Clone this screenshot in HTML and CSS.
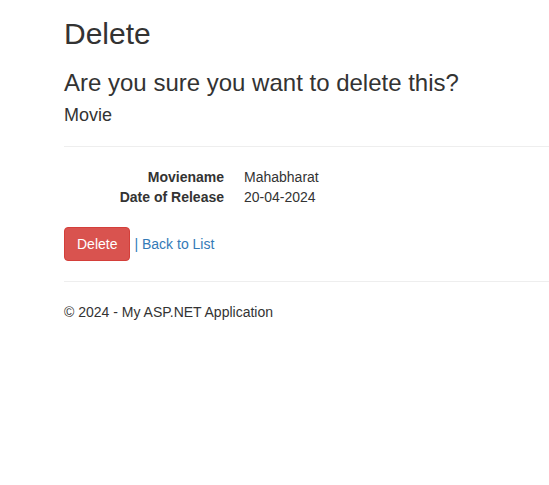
FILE: index.html
```html
<!DOCTYPE html>
<html>
<head>
<meta charset="utf-8">
<title>Delete</title>
<link rel="stylesheet" href="styles.css">
</head>
<body>
<div class="container body-content">
  <h2 class="page-title">Delete</h2>
  <h3 class="confirm">Are you sure you want to delete this?</h3>
  <div>
    <h4 class="entity">Movie</h4>
    <hr class="rule">
    <dl class="dl-horizontal">
      <dt>Moviename</dt>
      <dd>Mahabharat</dd>
      <dt>Date of Release</dt>
      <dd>20-04-2024</dd>
    </dl>
    <form class="actions">
      <button type="button" class="btn btn-danger">Delete</button>
      <a class="back-link" href="#">| Back to List</a>
    </form>
  </div>
  <hr class="rule">
  <footer class="footer">
    <p>&copy; 2024 - My ASP.NET Application</p>
  </footer>
</div>
</body>
</html>
```

FILE: styles.css
```css
html, body {
  margin: 0;
  padding: 0;
  background: #fff;
}
body {
  font-family: "Liberation Sans", Arial, Helvetica, sans-serif;
  font-size: 14px;
  line-height: 1.42857143;
  color: #333;
}
.container {
  padding-left: 64px;
  padding-top: 17px;
}
h2, h3, h4 {
  font-family: "Liberation Sans", Arial, Helvetica, sans-serif;
  font-weight: 500;
  line-height: 1.1;
  color: #333;
}
.page-title {
  font-size: 30px;
  margin: 0 0 10px;
}
.confirm {
  font-size: 24px;
  margin: 20px 0 10px;
}
.entity {
  font-size: 18px;
  margin: 10px 0 10px;
}
.rule {
  margin: 20px 0;
  border: 0;
  border-top: 1px solid #eee;
  height: 0;
}
.dl-horizontal {
  margin: 0 0 20px;
  display: grid;
  grid-template-columns: 160px 1fr;
  column-gap: 20px;
}
.dl-horizontal dt {
  font-weight: bold;
  text-align: right;
  white-space: nowrap;
}
.dl-horizontal dd {
  margin: 0;
}
.actions {
  margin: 0;
  display: flex;
  align-items: baseline;
  gap: 4px;
}
.btn {
  display: inline-block;
  padding: 6px 12px;
  font-family: inherit;
  font-size: 14px;
  line-height: 1.42857143;
  border: 1px solid transparent;
  border-radius: 4px;
  cursor: pointer;
}
.btn-danger {
  color: #fff;
  background-color: #d9534f;
  border-color: #d43f3a;
}
.back-link {
  color: #337ab7;
  text-decoration: none;
}
.footer p {
  margin: 0 0 10px;
}
```
